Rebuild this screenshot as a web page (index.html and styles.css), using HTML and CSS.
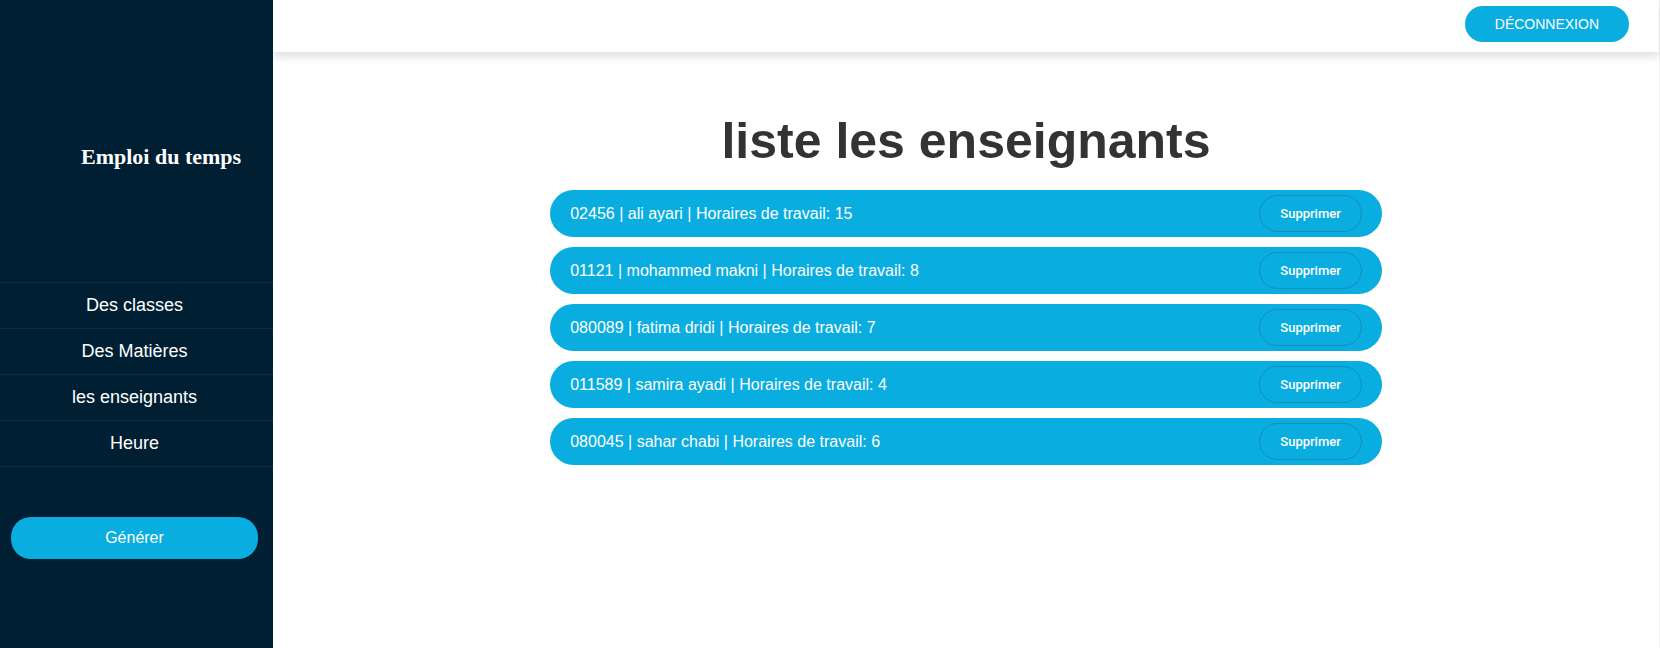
FILE: index.html
```html
<!DOCTYPE html>
<html lang="fr">
<head>
<meta charset="utf-8">
<meta name="viewport" content="width=device-width, initial-scale=1">
<title>Emploi du temps</title>
<link rel="stylesheet" href="styles.css">
</head>
<body>
<div class="app">
  <aside class="sidebar">
    <h2 class="brand">Emploi du temps</h2>
    <nav class="menu">
      <a class="menu-link" href="#classes">Des classes</a>
      <a class="menu-link" href="#matieres">Des Matières</a>
      <a class="menu-link" href="#enseignants">les enseignants</a>
      <a class="menu-link" href="#heure">Heure</a>
    </nav>
    <button class="generate" type="button">Générer</button>
  </aside>
  <div class="page">
    <header class="topbar">
      <button class="logout" type="button">DÉCONNEXION</button>
    </header>
    <main class="content">
      <h1 class="title">liste les enseignants</h1>
      <ul class="teachers">
        <li class="teacher"><span>02456 | ali ayari | Horaires de travail: 15</span><button class="remove" type="button">Supprimer</button></li>
        <li class="teacher"><span>01121 | mohammed makni | Horaires de travail: 8</span><button class="remove" type="button">Supprimer</button></li>
        <li class="teacher"><span>080089 | fatima dridi | Horaires de travail: 7</span><button class="remove" type="button">Supprimer</button></li>
        <li class="teacher"><span>011589 | samira ayadi | Horaires de travail: 4</span><button class="remove" type="button">Supprimer</button></li>
        <li class="teacher"><span>080045 | sahar chabi | Horaires de travail: 6</span><button class="remove" type="button">Supprimer</button></li>
      </ul>
    </main>
  </div>
</div>
</body>
</html>
```
FILE: styles.css
```css
* {
  box-sizing: border-box;
}

body {
  margin: 0;
  font-family: "Liberation Sans", Arial, sans-serif;
  font-size: 16px;
  background: #fff;
}

button {
  font-family: inherit;
  color: #fff;
  background: #0aaddf;
  border: 0;
  cursor: pointer;
}

.app {
  display: flex;
  min-height: 100vh;
}

.sidebar {
  display: flex;
  flex-direction: column;
  flex: 0 0 273px;
  z-index: 1;
  background: #001f33;
}

.brand {
  margin: 0;
  padding: 144px 0 112px 81px;
  font-family: "Liberation Serif", "Times New Roman", serif;
  font-size: 22px;
  line-height: 26px;
  color: #fff;
}

.menu {
  display: flex;
  flex-direction: column;
  border-top: 1px solid #033049;
}

.menu-link {
  padding: 0 4px 0 0;
  border-bottom: 1px solid #033049;
  font-size: 18px;
  line-height: 45px;
  text-align: center;
  text-decoration: none;
  color: #fff;
}

.generate {
  height: 42px;
  margin: 50px 15px 0 11px;
  border-radius: 20px;
  font-size: 16px;
}

.page {
  display: flex;
  flex-direction: column;
  flex: 1;
  border-right: 1px solid #f0f0f0;
}

.topbar {
  display: flex;
  justify-content: flex-end;
  padding: 6px 30px 10px;
  background: #fff;
  box-shadow: 0 5px 8px rgba(0, 0, 0, 0.12);
}

.logout {
  height: 36px;
  padding: 0 30px;
  border-radius: 20px;
  font-size: 14px;
}

.content {
  width: 60%;
  margin: 0 auto;
  padding-top: 60px;
}

.title {
  margin: 0 0 20px;
  font-size: 50px;
  line-height: 58px;
  text-align: center;
  color: #333;
}

.teachers {
  display: flex;
  flex-direction: column;
  gap: 10px;
  margin: 0;
  padding: 0;
  list-style: none;
}

.teacher {
  display: flex;
  align-items: center;
  justify-content: space-between;
  padding: 5px 20px;
  border-radius: 24px;
  color: #fff;
  background: #0aaddf;
}

.remove {
  height: 37px;
  padding: 0 20px;
  border: 1px solid #178db5;
  border-radius: 20px;
  font-family: Roboto, sans-serif;
  font-size: 13px;
  font-weight: 500;
}
```
